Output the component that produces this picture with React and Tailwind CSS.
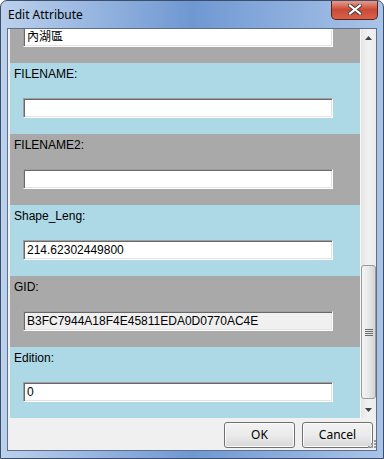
import React from 'react'

const rows = [
  { label: '', value: '內湖區', gray: true },
  { label: 'FILENAME:', value: '' },
  { label: 'FILENAME2:', value: '', gray: true },
  { label: 'Shape_Leng:', value: '214.62302449800' },
  { label: 'GID:', value: 'B3FC7944A18F4E45811EDA0D0770AC4E', gray: true, readOnly: true },
  { label: 'Edition:', value: '0' },
]

const Field = ({ label, value, gray, readOnly }) => (
  <div className={`h-[71px] pt-[4px] ${gray ? 'bg-[#a9a9a9]' : 'bg-[#add8e6]'}`}>
    <div className="pl-[4px] h-[14px] leading-[14px] text-[12px] text-black">{label}</div>
    <div
      className={`mt-[17px] ml-[13px] w-[310px] h-[20px] flex items-center pl-[3px] text-[12px] text-black border border-t-[#a0a0a0] border-l-[#a0a0a0] border-b-white border-r-white shadow-[inset_1px_1px_0_#696969,inset_-1px_-1px_0_#e3e3e3] ${readOnly ? 'bg-[#f0f0f0]' : 'bg-white'}`}
    >
      {value}
    </div>
  </div>
)

const Arrow = ({ up }) => (
  <svg width="7" height="4" viewBox="0 0 7 4">
    <path d={up ? 'M0 4 L3.5 0 L7 4 Z' : 'M0 0 L3.5 4 L7 0 Z'} fill="#404040" />
  </svg>
)

const Scrollbar = () => (
  <div className="w-[16px] h-full flex flex-col bg-gradient-to-r from-[#e6e6e6] via-[#f2f2f2] to-[#ebebeb] border-l border-[#f7f7f7]">
    <div className="h-[17px] flex items-center justify-center">
      <Arrow up />
    </div>
    <div className="flex-1 flex flex-col">
      <div className="h-[219px]" />
      <div className="h-[134px] mx-[0px] rounded-[3px] border border-[#9a9a9a] bg-gradient-to-r from-[#f4f4f4] via-[#e8e8e8] to-[#d4d4d4] flex flex-col items-center justify-center gap-[1px]">
        <div className="w-[8px] h-[1px] bg-[#6a6a6a]" />
        <div className="w-[8px] h-[1px] bg-[#6a6a6a]" />
        <div className="w-[8px] h-[1px] bg-[#6a6a6a]" />
        <div className="w-[8px] h-[1px] bg-[#6a6a6a]" />
      </div>
      <div className="flex-1" />
    </div>
    <div className="h-[17px] flex items-center justify-center">
      <Arrow />
    </div>
  </div>
)

const Button = ({ children }) => (
  <div className="w-[71px] h-[26px] rounded-[3px] border border-[#707070] bg-gradient-to-b from-[#f2f2f2] via-[#ebebeb] to-[#d9d9d9] shadow-[inset_0_0_0_1px_#fcfcfc] flex items-center justify-center text-[12px] text-black font-['Noto_Sans',sans-serif]">
    {children}
  </div>
)

export default function App() {
  return (
    <div className="w-[384px] h-[459px] rounded-t-[7px] border border-[#3c4e6b] bg-gradient-to-r from-[#bcd1ec] via-[#6f98d2] to-[#a9c4e8] flex flex-col overflow-hidden font-['Liberation_Sans','Noto_Sans_CJK_TC',sans-serif]">
      <div className="h-[27px] shrink-0 flex">
        <div className="self-center pl-[7px] pt-[1px] text-[12px] text-black font-['Noto_Sans',sans-serif]">Edit Attribute</div>
        <div className="ml-auto mr-[5px] -mt-[1px] w-[47px] h-[20px] rounded-b-[5px] border border-t-0 border-[#5e2219] bg-gradient-to-b from-[#e9a596] via-[#c94a37] to-[#d7614a] flex items-center justify-center">
          <svg width="14" height="11" viewBox="0 0 14 11">
            <path d="M2 1.5 L12 9.5 M12 1.5 L2 9.5" stroke="#3b3b3b" strokeWidth="4" strokeLinecap="square" />
            <path d="M2 1.5 L12 9.5 M12 1.5 L2 9.5" stroke="#ffffff" strokeWidth="2.2" strokeLinecap="square" />
          </svg>
        </div>
      </div>
      <div className="mx-[6px] h-[423px] shrink-0 border border-[#5d6f8a] bg-[#f0f0f0] flex flex-col">
        <div className="h-[389px] flex pl-[2px]">
          <div className="w-[350px] h-full overflow-hidden">
            <div className="-mt-[37px]">
              {rows.map((r, i) => (
                <Field key={i} {...r} />
              ))}
            </div>
          </div>
          <Scrollbar />
        </div>
        <div className="relative flex-1 flex justify-end items-start pt-[4px] pr-[3px] gap-[7px]">
          <Button>OK</Button>
          <Button>Cancel</Button>
          <svg className="absolute right-0 bottom-0" width="11" height="11" viewBox="0 0 11 11">
            {[[9, 1], [9, 4], [6, 4], [9, 7], [6, 7], [3, 7]].map(([x, y], i) => (
              <rect key={i} x={x} y={y} width="2" height="2" fill="#9a9a9a" />
            ))}
          </svg>
        </div>
      </div>
    </div>
  )
}
